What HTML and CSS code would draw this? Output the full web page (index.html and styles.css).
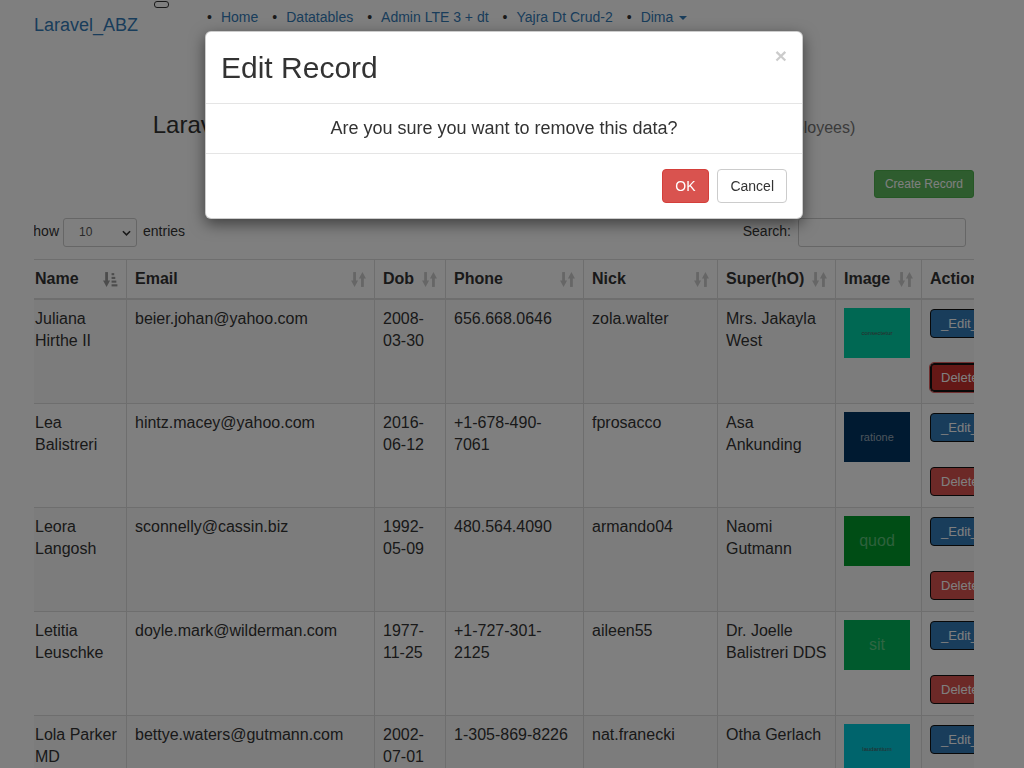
FILE: index.html
```html
<!DOCTYPE html>
<html lang="en">
<head>
<meta charset="utf-8">
<title>Laravel_ABZ</title>
<link rel="stylesheet" href="styles.css">
</head>
<body>
<nav class="navbar">
  <a class="brand" href="#">Laravel_ABZ</a>
  <span class="toggle"></span>
  <ul class="nav-links">
    <li><a href="#">Home</a></li>
    <li><a href="#">Datatables</a></li>
    <li><a href="#">Admin LTE 3 + dt</a></li>
    <li><a href="#">Yajra Dt Crud-2</a></li>
    <li><a href="#">Dima <span class="caret"></span></a></li>
  </ul>
</nav>

<main class="container">
  <h2 class="page-title">Laravel Yajra Datatables Ajax CRUD with Image Uploads <small>(Employees)</small></h2>
  <div class="toolbar">
    <button class="btn btn-success">Create Record</button>
  </div>

  <div class="dt-clip">
    <div class="dt-wrapper">
      <div class="dt-top">
        <label class="dt-length">Show
          <span class="select-wrap">
            <select class="dt-select"><option>10</option><option>25</option><option>50</option></select>
            <svg class="chev" viewBox="0 0 10 6" width="9" height="6"><path d="M1 1l4 4 4-4" fill="none" stroke="#333" stroke-width="1.8"/></svg>
          </span>
          entries</label>
        <label class="dt-search">Search: <input type="search" class="dt-input"></label>
      </div>

      <table class="dt-table">
        <thead>
          <tr>
            <th class="c-name"><div class="th-in"><span>Name</span>
              <svg class="sort active" viewBox="0 0 14 16" width="15" height="17"><rect x="2" y="1" width="2.6" height="9"/><polygon points="0,9 6.6,9 3.3,15"/><rect x="8" y="2" width="2.5" height="2"/><rect x="8" y="5.5" width="3.5" height="2"/><rect x="8" y="9" width="4.5" height="2"/><rect x="8" y="12.5" width="5.5" height="2"/></svg></div></th>
            <th class="c-email"><div class="th-in"><span>Email</span>
              <svg class="sort" viewBox="0 0 14 16" width="15" height="17"><rect x="2" y="1" width="2.6" height="9"/><polygon points="0,9 6.6,9 3.3,15"/><polygon points="7.4,7 14,7 10.7,1"/><rect x="9.4" y="6" width="2.6" height="9"/></svg></div></th>
            <th class="c-dob"><div class="th-in"><span>Dob</span>
              <svg class="sort" viewBox="0 0 14 16" width="15" height="17"><rect x="2" y="1" width="2.6" height="9"/><polygon points="0,9 6.6,9 3.3,15"/><polygon points="7.4,7 14,7 10.7,1"/><rect x="9.4" y="6" width="2.6" height="9"/></svg></div></th>
            <th class="c-phone"><div class="th-in"><span>Phone</span>
              <svg class="sort" viewBox="0 0 14 16" width="15" height="17"><rect x="2" y="1" width="2.6" height="9"/><polygon points="0,9 6.6,9 3.3,15"/><polygon points="7.4,7 14,7 10.7,1"/><rect x="9.4" y="6" width="2.6" height="9"/></svg></div></th>
            <th class="c-nick"><div class="th-in"><span>Nick</span>
              <svg class="sort" viewBox="0 0 14 16" width="15" height="17"><rect x="2" y="1" width="2.6" height="9"/><polygon points="0,9 6.6,9 3.3,15"/><polygon points="7.4,7 14,7 10.7,1"/><rect x="9.4" y="6" width="2.6" height="9"/></svg></div></th>
            <th class="c-super"><div class="th-in"><span>Super(hO)</span>
              <svg class="sort" viewBox="0 0 14 16" width="15" height="17"><rect x="2" y="1" width="2.6" height="9"/><polygon points="0,9 6.6,9 3.3,15"/><polygon points="7.4,7 14,7 10.7,1"/><rect x="9.4" y="6" width="2.6" height="9"/></svg></div></th>
            <th class="c-image"><div class="th-in"><span>Image</span>
              <svg class="sort" viewBox="0 0 14 16" width="15" height="17"><rect x="2" y="1" width="2.6" height="9"/><polygon points="0,9 6.6,9 3.3,15"/><polygon points="7.4,7 14,7 10.7,1"/><rect x="9.4" y="6" width="2.6" height="9"/></svg></div></th>
            <th class="c-action"><div class="th-in"><span>Action</span></div></th>
          </tr>
        </thead>
        <tbody>
          <tr>
            <td>Juliana Hirthe II</td>
            <td>beier.johan@yahoo.com</td>
            <td>2008-03-30</td>
            <td>656.668.0646</td>
            <td>zola.walter</td>
            <td>Mrs. Jakayla West</td>
            <td><div class="thumb t-teal"><span class="tiny">consectetur</span></div></td>
            <td><div class="actions"><button class="btn-act edit">_Edit_</button><button class="btn-act del focused">Delete</button></div></td>
          </tr>
          <tr>
            <td>Lea Balistreri</td>
            <td>hintz.macey@yahoo.com</td>
            <td>2016-06-12</td>
            <td>+1-678-490-7061</td>
            <td>fprosacco</td>
            <td>Asa Ankunding</td>
            <td><div class="thumb t-navy"><span class="small-t">ratione</span></div></td>
            <td><div class="actions"><button class="btn-act edit">_Edit_</button><button class="btn-act del">Delete</button></div></td>
          </tr>
          <tr>
            <td>Leora Langosh</td>
            <td>sconnelly@cassin.biz</td>
            <td>1992-05-09</td>
            <td>480.564.4090</td>
            <td>armando04</td>
            <td>Naomi Gutmann</td>
            <td><div class="thumb t-green"><span class="big-t">quod</span></div></td>
            <td><div class="actions"><button class="btn-act edit">_Edit_</button><button class="btn-act del">Delete</button></div></td>
          </tr>
          <tr>
            <td>Letitia Leuschke</td>
            <td>doyle.mark@wilderman.com</td>
            <td>1977-11-25</td>
            <td>+1-727-301-2125</td>
            <td>aileen55</td>
            <td>Dr. Joelle Balistreri DDS</td>
            <td><div class="thumb t-lime"><span class="big-t">sit</span></div></td>
            <td><div class="actions"><button class="btn-act edit">_Edit_</button><button class="btn-act del">Delete</button></div></td>
          </tr>
          <tr>
            <td>Lola Parker MD</td>
            <td>bettye.waters@gutmann.com</td>
            <td>2002-07-01</td>
            <td>1-305-869-8226</td>
            <td>nat.franecki</td>
            <td>Otha Gerlach</td>
            <td><div class="thumb t-cyan"><span class="tiny">laudantium</span></div></td>
            <td><div class="actions"><button class="btn-act edit">_Edit_</button><button class="btn-act del">Delete</button></div></td>
          </tr>
        </tbody>
      </table>
    </div>
  </div>
</main>

<div class="backdrop"></div>

<div class="modal">
  <div class="modal-header">
    <h4 class="modal-title">Edit Record</h4>
    <button class="close" type="button">&times;</button>
  </div>
  <div class="modal-body">Are you sure you want to remove this data?</div>
  <div class="modal-footer">
    <button class="btn btn-danger">OK</button>
    <button class="btn btn-default">Cancel</button>
  </div>
</div>
</body>
</html>
```

FILE: styles.css
```css
html, body {
  margin: 0;
  padding: 0;
}
body {
  font-family: "Liberation Sans", Arial, sans-serif;
  font-size: 14px;
  line-height: 1.42857;
  color: #333;
  background: #fff;
  overflow: hidden;
}
a {
  color: #337ab7;
  text-decoration: none;
}

/* navbar */
.navbar {
  display: flex;
  align-items: flex-start;
  height: 50px;
  padding-left: 34px;
}
.brand {
  font-size: 18px;
  line-height: 20px;
  padding-top: 15px;
}
.toggle {
  box-sizing: border-box;
  width: 15px;
  height: 7px;
  margin: 1px 0 0 16px;
  border: 1px solid #333;
  border-radius: 3px;
}
.nav-links {
  display: flex;
  list-style: none;
  margin: 7px 0 0 38px;
  padding: 0;
  line-height: 20px;
}
.nav-links li {
  margin-right: 14px;
}
.nav-links li::before {
  content: "\2022";
  color: #333;
  margin-right: 9px;
}
.caret {
  display: inline-block;
  width: 0;
  height: 0;
  margin-left: 2px;
  vertical-align: middle;
  border-top: 4px solid;
  border-left: 4px solid transparent;
  border-right: 4px solid transparent;
}

/* container */
.container {
  width: 940px;
  margin-left: 34px;
}
.page-title {
  margin: 62px 0 0;
  font-size: 24px;
  font-weight: 500;
  line-height: 26px;
  text-align: center;
  white-space: nowrap;
}
.page-title small {
  font-size: 16px;
  color: #777;
  font-weight: 400;
}
.toolbar {
  display: flex;
  justify-content: flex-end;
  margin-top: 29px;
}

/* buttons */
.btn {
  display: inline-block;
  font-family: inherit;
  font-size: 14px;
  line-height: 20px;
  padding: 6px 12px;
  border: 1px solid transparent;
  border-radius: 4px;
  cursor: pointer;
}
.btn-success {
  font-size: 12px;
  line-height: 16px;
  padding: 5px 10px;
  border-radius: 3px;
  background: #5cb85c;
  border-color: #4cae4c;
  color: #fff;
}
.btn-danger {
  background: #d9534f;
  border-color: #d43f3a;
  color: #fff;
}
.btn-default {
  background: #fff;
  border-color: #ccc;
  color: #333;
  margin-left: 5px;
}

/* datatable */
.dt-clip {
  width: 940px;
  overflow: hidden;
  margin-top: 19px;
}
.dt-wrapper {
  margin-left: -8px;
}
.dt-top {
  display: flex;
  justify-content: space-between;
  align-items: center;
  width: 940px;
  height: 30px;
}
.dt-length, .dt-search {
  display: flex;
  align-items: center;
  font-weight: 400;
}
.dt-length {
  margin-left: -2px;
}
.select-wrap {
  position: relative;
  display: inline-block;
  margin: 0 6px 0 4px;
  height: 29px;
}
.dt-select {
  appearance: none;
  -webkit-appearance: none;
  box-sizing: border-box;
  width: 74px;
  height: 29px;
  padding: 0 0 0 15px;
  border: 1px solid #ccc;
  border-radius: 3px;
  background: #fff;
  color: #555;
  font-family: inherit;
  font-size: 12px;
}
.chev {
  position: absolute;
  right: 6px;
  top: 12px;
}
.dt-input {
  box-sizing: border-box;
  width: 168px;
  height: 29px;
  margin-left: 7px;
  border: 1px solid #ccc;
  border-radius: 3px;
  background: #fff;
}

.dt-table {
  margin-top: 12px;
  border-collapse: collapse;
  table-layout: fixed;
  width: 995px;
  font-size: 16px;
  line-height: 22px;
}
.dt-table th, .dt-table td {
  box-sizing: border-box;
  border: 1px solid #ddd;
  padding: 8px;
  vertical-align: top;
  text-align: left;
}
.dt-table thead th {
  border-bottom: 2px solid #ddd;
  padding-right: 8px;
  font-weight: 700;
  white-space: nowrap;
  overflow: hidden;
}
.th-in {
  display: flex;
  justify-content: space-between;
  align-items: center;
}
.sort {
  fill: #ccc;
  flex: none;
}
.sort.active {
  fill: #999;
}
.dt-table tbody tr:nth-child(odd) td {
  background: #f9f9f9;
}
.c-name { width: 100px; }
.c-email { width: 248px; }
.c-dob { width: 71px; }
.c-phone { width: 138px; }
.c-nick { width: 134px; }
.c-super { width: 118px; }
.c-image { width: 86px; }
.c-action { width: 100px; }

.thumb {
  width: 66px;
  height: 50px;
  display: flex;
  align-items: center;
  justify-content: center;
  overflow: hidden;
}
.thumb .tiny { font-size: 6px; line-height: 8px; color: #555; }
.thumb .small-t { font-size: 11px; line-height: 12px; color: #9aa8b8; }
.thumb .big-t { font-size: 16px; line-height: 18px; }
.t-teal { background: #00d0a6; }
.t-navy { background: #003562; }
.t-green { background: #009a2a; }
.t-green .big-t { color: #5cc278; }
.t-lime { background: #00b45a; }
.t-lime .big-t { color: #5ecc86; }
.t-cyan { background: #00c8d8; }

.actions {
  display: flex;
  flex-direction: column;
  align-items: flex-start;
  gap: 25px;
  padding: 1px 0 3px;
}
.btn-act {
  font-family: inherit;
  font-size: 13px;
  line-height: 19px;
  padding: 4px 10px;
  border: 1px solid #111;
  border-radius: 4px;
  color: #fff;
  white-space: nowrap;
}
.btn-act.edit { background: #337ab7; }
.btn-act.del { background: #d9534f; }
.btn-act.del.focused {
  background: #c9302c;
  box-shadow: inset 0 0 0 1px #111;
  outline: 1px solid #e06060;
}

/* modal */
.backdrop {
  position: fixed;
  inset: 0;
  background: rgba(0, 0, 0, 0.5);
}
.modal {
  position: fixed;
  top: 31px;
  left: 205px;
  width: 598px;
  box-sizing: border-box;
  background: #fff;
  border: 1px solid rgba(0, 0, 0, 0.2);
  border-radius: 6px;
  box-shadow: 0 5px 15px rgba(0, 0, 0, 0.5);
}
.modal-header {
  display: flex;
  justify-content: space-between;
  align-items: flex-start;
  padding: 15px;
  border-bottom: 1px solid #e5e5e5;
}
.modal-title {
  margin: 0;
  font-size: 30px;
  font-weight: 500;
  line-height: 41px;
}
.close {
  margin-top: -2px;
  padding: 0;
  border: 0;
  background: transparent;
  font-family: inherit;
  font-size: 21px;
  font-weight: 700;
  line-height: 1;
  color: #000;
  opacity: 0.2;
}
.modal-body {
  padding: 15px;
  text-align: center;
  font-size: 18px;
  line-height: 19px;
}
.modal-footer {
  padding: 15px;
  border-top: 1px solid #e5e5e5;
  text-align: right;
}
```
